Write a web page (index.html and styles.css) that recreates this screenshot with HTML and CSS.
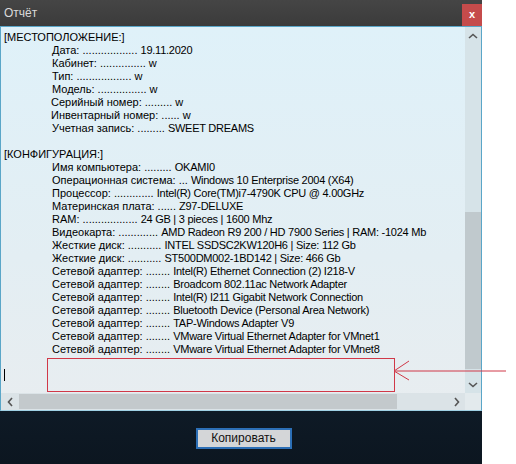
FILE: index.html
```html
<!DOCTYPE html>
<html lang="ru">
<head>
<meta charset="utf-8">
<title>Отчёт</title>
<link rel="stylesheet" href="styles.css">
</head>
<body>
<div class="window">
  <div class="titlebar">
    <span class="title">Отчёт</span>
    <span class="close">x</span>
  </div>
  <div class="panel">
    <div class="text">
<div class="ln">[МЕСТОПОЛОЖЕНИЕ:]</div>
<div class="ln in">Дата: .................. <span class="v">19.11.2020</span></div>
<div class="ln in">Кабинет: ............... w</div>
<div class="ln in">Тип: .................. w</div>
<div class="ln in">Модель: ................ w</div>
<div class="ln in2">Серийный номер: ......... w</div>
<div class="ln in2">Инвентарный номер: ...... w</div>
<div class="ln in">Учетная запись: ......... <span class="v">SWEET DREAMS</span></div>
<div class="ln">&nbsp;</div>
<div class="ln">[КОНФИГУРАЦИЯ:]</div>
<div class="ln in">Имя компьютера: ......... <span class="v">OKAMI0</span></div>
<div class="ln in">Операционная система: ... <span class="v">Windows 10 Enterprise 2004 (X64)</span></div>
<div class="ln in">Процессор: ............. <span class="v">Intel(R) Core(TM)i7-4790K CPU @ 4.00GHz</span></div>
<div class="ln in">Материнская плата: ...... <span class="v">Z97-DELUXE</span></div>
<div class="ln in">RAM: .................. <span class="v">24 GB | 3 pieces | 1600 Mhz</span></div>
<div class="ln in">Видеокарта: ............. <span class="v">AMD Radeon R9 200 / HD 7900 Series | RAM: -1024 Mb</span></div>
<div class="ln in">Жесткие диск: ........... <span class="v">INTEL SSDSC2KW120H6 | Size: 112 Gb</span></div>
<div class="ln in">Жесткие диск: ........... <span class="v">ST500DM002-1BD142 | Size: 466 Gb</span></div>
<div class="ln in">Сетевой адаптер: ........ <span class="v">Intel(R) Ethernet Connection (2) I218-V</span></div>
<div class="ln in">Сетевой адаптер: ........ <span class="v">Broadcom 802.11ac Network Adapter</span></div>
<div class="ln in">Сетевой адаптер: ........ <span class="v">Intel(R) I211 Gigabit Network Connection</span></div>
<div class="ln in">Сетевой адаптер: ........ <span class="v">Bluetooth Device (Personal Area Network)</span></div>
<div class="ln in">Сетевой адаптер: ........ <span class="v">TAP-Windows Adapter V9</span></div>
<div class="ln in">Сетевой адаптер: ........ <span class="v">VMware Virtual Ethernet Adapter for VMnet1</span></div>
<div class="ln in">Сетевой адаптер: ........ <span class="v">VMware Virtual Ethernet Adapter for VMnet8</span></div>
<div class="ln">&nbsp;</div>
<div class="ln"><span class="caret"></span></div>
    </div>
    <div class="vscroll">
      <div class="arrow"><svg width="10" height="6" viewBox="0 0 10 6"><path d="M1 5 L5 1.5 L9 5" fill="none" stroke="#555" stroke-width="1.6"/></svg></div>
      <div class="vtrack"><div class="vthumb"></div></div>
      <div class="arrow"><svg width="10" height="6" viewBox="0 0 10 6"><path d="M1 1 L5 4.5 L9 1" fill="none" stroke="#555" stroke-width="1.6"/></svg></div>
    </div>
    <div class="hscroll">
      <div class="arrow"><svg width="6" height="10" viewBox="0 0 6 10"><path d="M5 1 L1.5 5 L5 9" fill="none" stroke="#555" stroke-width="1.6"/></svg></div>
      <div class="htrack"><div class="hthumb"></div></div>
      <div class="arrow"><svg width="6" height="10" viewBox="0 0 6 10"><path d="M1 1 L4.5 5 L1 9" fill="none" stroke="#555" stroke-width="1.6"/></svg></div>
    </div>
    <div class="corner"></div>
  </div>
  <div class="bottom">
    <button class="btn">Копировать</button>
  </div>
</div>
<div class="mark-box"></div>
<svg class="mark-arrow" width="120" height="30" viewBox="0 0 120 30">
  <path d="M1 14 L113 14 M1 14 L16 4 M1 14 L16 23" fill="none" stroke="#d03848" stroke-width="1"/>
</svg>
</body>
</html>
```
FILE: styles.css
```css
html, body {
  margin: 0;
  padding: 0;
  background: #ffffff;
}
body {
  width: 516px;
  height: 464px;
  position: relative;
  overflow: hidden;
  font-family: "Liberation Sans", Arial, sans-serif;
}
.window {
  width: 482px;
  height: 464px;
  display: flex;
  flex-direction: column;
  background: #0d1823;
}
.titlebar {
  height: 26px;
  flex: none;
  display: flex;
  align-items: flex-start;
  justify-content: space-between;
  background: linear-gradient(#454545, #3b3b3b);
}
.title {
  color: #dadada;
  font-size: 12px;
  line-height: 26px;
  padding-left: 4px;
}
.close {
  width: 20px;
  height: 22px;
  margin-top: 4px;
  background: #c54b4b;
  color: #ffffff;
  font-size: 11px;
  font-weight: bold;
  line-height: 20px;
  text-align: center;
}
.panel {
  height: 385px;
  flex: none;
  box-sizing: border-box;
  border: 1px solid #5aa6c8;
  border-bottom-color: #9fd0e4;
  display: grid;
  grid-template-columns: 1fr 16px;
  grid-template-rows: 1fr 17px;
  background: linear-gradient(#dff1f9, #e3eef3 60%, #e8edf0);
}
.text {
  padding-top: 4px;
  overflow: hidden;
  font-size: 11px;
  line-height: 13px;
  color: #000000;
}
.ln {
  white-space: pre;
  padding-left: 3px;
  height: 13px;
}
.ln.in {
  padding-left: 51px;
}
.ln.in2 {
  padding-left: 50px;
}
.v {
  letter-spacing: -0.25px;
}
.caret {
  display: inline-block;
  width: 1px;
  height: 12px;
  background: #000;
  vertical-align: -1px;
}
.vscroll {
  display: flex;
  flex-direction: column;
  background: #d6e3e8;
}
.arrow {
  flex: none;
  height: 17px;
  width: 16px;
  display: flex;
  align-items: center;
  justify-content: center;
}
.vtrack {
  flex: 1;
  display: flex;
  flex-direction: column;
}
.vthumb {
  margin-top: 168px;
  height: 157px;
  background: #c0c9cd;
}
.hscroll {
  display: flex;
  background: #dbe3e7;
}
.hscroll .arrow {
  width: 17px;
  height: 17px;
}
.htrack {
  flex: 1;
  display: flex;
  padding: 1px 0;
}
.hthumb {
  margin-left: 1px;
  width: 378px;
  background: #c3c9cc;
}
.corner {
  background: #e3eaed;
}
.bottom {
  flex: 1;
  display: flex;
  justify-content: center;
  align-items: flex-start;
  padding-top: 17px;
  padding-left: 5px;
  background: linear-gradient(#0e1a26, #0c1620);
}
.btn {
  width: 96px;
  height: 21px;
  box-sizing: border-box;
  border: 2px solid #2c6fb6;
  background: #d4d6d8;
  font-family: "Liberation Sans", Arial, sans-serif;
  font-size: 12px;
  color: #111;
  padding: 0;
  line-height: 17px;
}
.mark-box {
  position: absolute;
  left: 47px;
  top: 358px;
  width: 346px;
  height: 32px;
  border: 1px solid #d03848;
}
.mark-arrow {
  position: absolute;
  left: 393px;
  top: 357px;
}
```
